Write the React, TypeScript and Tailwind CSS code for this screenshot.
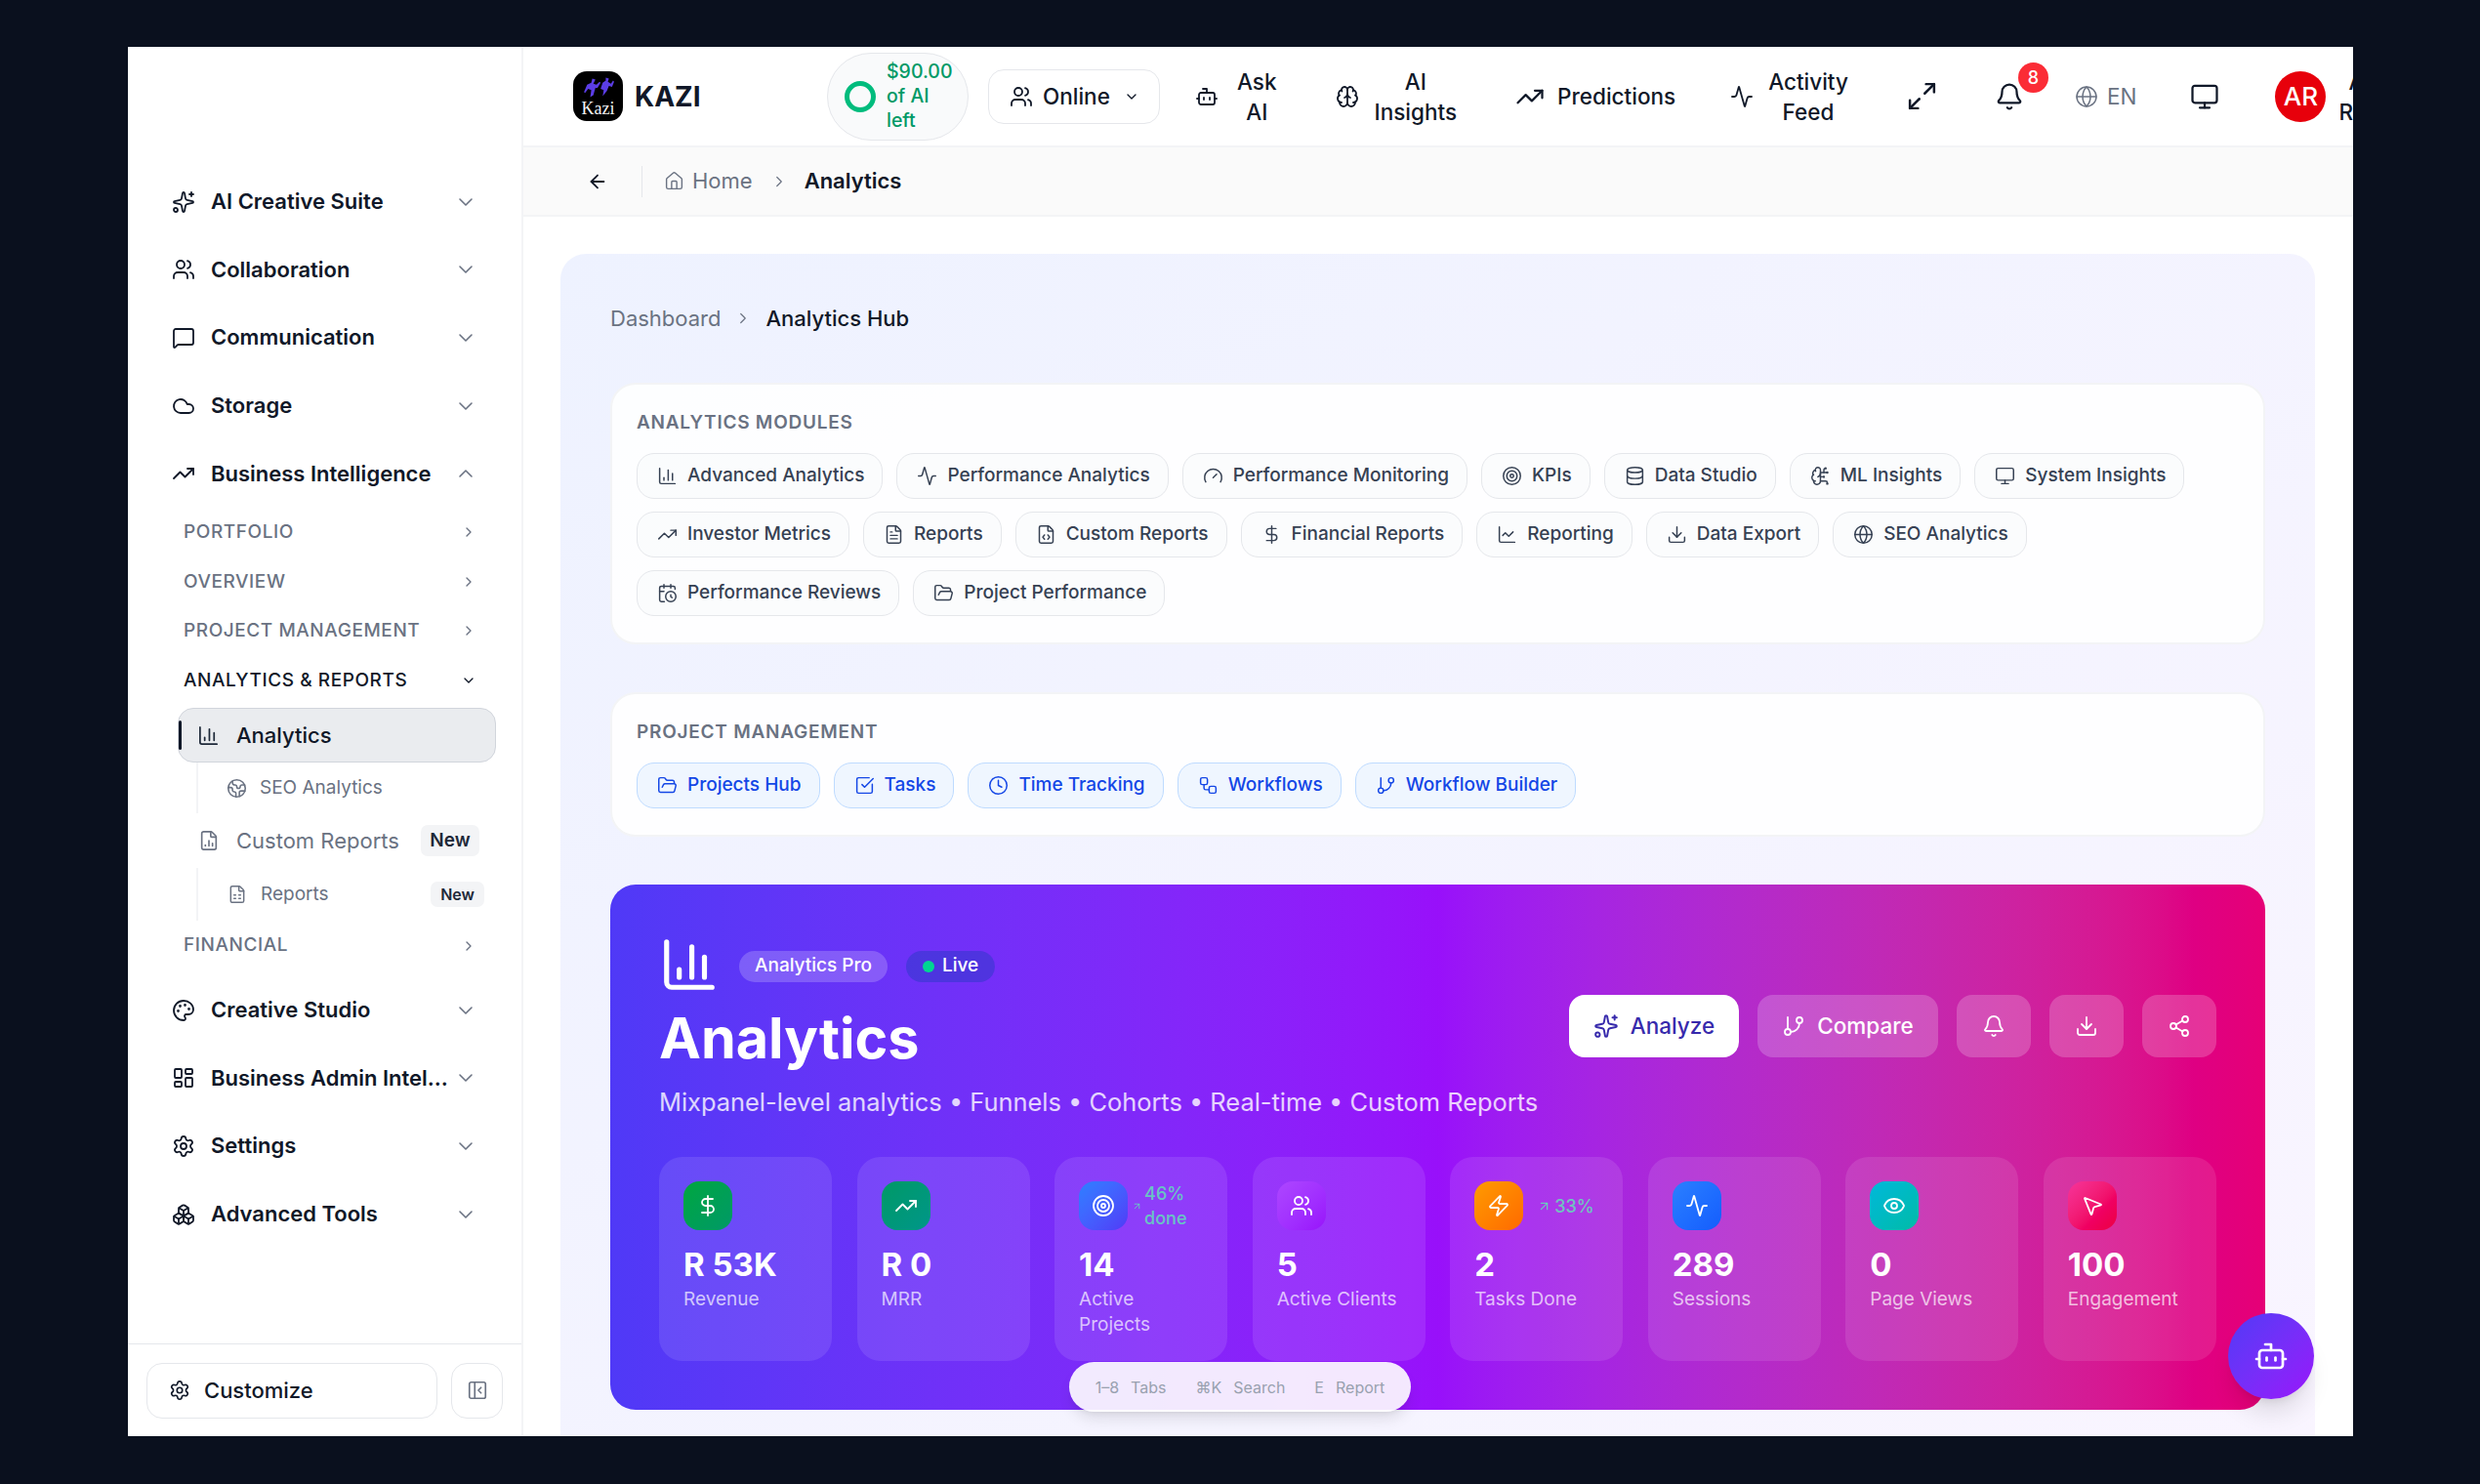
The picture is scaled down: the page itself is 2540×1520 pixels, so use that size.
import type { ComponentType } from "react";
import {
  Activity,
  ArrowLeft,
  ArrowUpRight,
  BarChart3,
  Bell,
  Bot,
  Boxes,
  Brain,
  BrainCircuit,
  CalendarClock,
  ChartLine,
  ChevronDown,
  ChevronRight,
  ChevronUp,
  Clock,
  Cloud,
  Database,
  DollarSign,
  Download,
  Earth,
  Eye,
  FileChartColumn,
  FileCode,
  FileSpreadsheet,
  FileText,
  FolderOpen,
  Gauge,
  GitBranch,
  Globe,
  Home,
  LayoutDashboard,
  Maximize2,
  MessageSquare,
  Monitor,
  MousePointer2,
  Palette,
  PanelLeftClose,
  Settings,
  Share2,
  Sparkles,
  SquareCheckBig,
  Target,
  TrendingUp,
  Users,
  Workflow,
  Zap,
} from "lucide-react";

type Icon = ComponentType<{ className?: string; strokeWidth?: number }>;

const analyticsChips: [Icon, string][] = [
  [BarChart3, "Advanced Analytics"],
  [Activity, "Performance Analytics"],
  [Gauge, "Performance Monitoring"],
  [Target, "KPIs"],
  [Database, "Data Studio"],
  [BrainCircuit, "ML Insights"],
  [Monitor, "System Insights"],
  [TrendingUp, "Investor Metrics"],
  [FileText, "Reports"],
  [FileCode, "Custom Reports"],
  [DollarSign, "Financial Reports"],
  [ChartLine, "Reporting"],
  [Download, "Data Export"],
  [Globe, "SEO Analytics"],
  [CalendarClock, "Performance Reviews"],
  [FolderOpen, "Project Performance"],
];

const projectChips: [Icon, string][] = [
  [FolderOpen, "Projects Hub"],
  [SquareCheckBig, "Tasks"],
  [Clock, "Time Tracking"],
  [Workflow, "Workflows"],
  [GitBranch, "Workflow Builder"],
];

const stats = [
  { icon: DollarSign, bg: "bg-gradient-to-br from-green-600 to-emerald-600", value: "R 53K", label: "Revenue" },
  { icon: TrendingUp, bg: "bg-gradient-to-br from-emerald-600 to-teal-600", value: "R 0", label: "MRR" },
  {
    icon: Target,
    bg: "bg-gradient-to-br from-blue-500 to-indigo-600",
    value: "14",
    label: "Active Projects",
    trend: "46% done",
    trendClass: "ml-[4px]",
    arrowClass: "w-[11px] h-[11px] mr-[2px]",
  },
  { icon: Users, bg: "bg-gradient-to-br from-purple-500 to-purple-600", value: "5", label: "Active Clients" },
  {
    icon: Zap,
    bg: "bg-gradient-to-br from-amber-500 to-orange-500",
    value: "2",
    label: "Tasks Done",
    trend: "33%",
    trendClass: "ml-[14px]",
    arrowClass: "w-[15px] h-[15px] mr-[3px]",
  },
  { icon: Activity, bg: "bg-gradient-to-br from-blue-500 to-blue-600", value: "289", label: "Sessions" },
  { icon: Eye, bg: "bg-gradient-to-br from-cyan-500 to-teal-500", value: "0", label: "Page Views" },
  { icon: MousePointer2, bg: "bg-gradient-to-br from-pink-500 to-rose-600", value: "100", label: "Engagement" },
];

function NavRow({ icon: I, label, open }: { icon: Icon; label: string; open?: boolean }) {
  const Chevron = open ? ChevronUp : ChevronDown;
  return (
    <div className="h-[69.6px] pl-[45px] pr-[45px] flex items-center">
      <I className="w-6 h-6 text-gray-900 shrink-0" strokeWidth={1.8} />
      <span className="ml-[16px] mr-[6px] flex-1 truncate text-[22px] font-semibold text-gray-900">{label}</span>
      <Chevron className="w-[24px] h-[24px] text-gray-500 shrink-0" strokeWidth={1.6} />
    </div>
  );
}

function SubHeading({ label, open }: { label: string; open?: boolean }) {
  const Chevron = open ? ChevronDown : ChevronRight;
  return (
    <div className="h-[50.6px] pl-[57px] pr-[46px] flex items-center justify-between">
      <span className={`text-[19px] font-medium tracking-[0.03em] ${open ? "text-gray-900" : "text-gray-500"}`}>{label}</span>
      <Chevron className={`w-4 h-4 ${open ? "text-gray-900" : "text-gray-500"}`} />
    </div>
  );
}

function Sidebar() {
  return (
    <aside className="w-[405px] shrink-0 h-full flex flex-col bg-white border-r-2 border-gray-100">
      <nav className="pt-[124px] flex-1">
        <NavRow icon={Sparkles} label="AI Creative Suite" />
        <NavRow icon={Users} label="Collaboration" />
        <NavRow icon={MessageSquare} label="Communication" />
        <NavRow icon={Cloud} label="Storage" />
        <NavRow icon={TrendingUp} label="Business Intelligence" open />
        <SubHeading label="PORTFOLIO" />
        <SubHeading label="OVERVIEW" />
        <SubHeading label="PROJECT MANAGEMENT" />
        <SubHeading label="ANALYTICS & REPORTS" open />

        <div className="relative mt-[3px] ml-[51px] mr-[26px] h-[56px] flex items-center rounded-[16px] bg-gray-200/80 border border-gray-300 pl-[19px]">
          <span className="absolute left-[0px] top-[12px] bottom-[12px] w-[3px] bg-gray-900 rounded" />
          <BarChart3 className="w-[23px] h-[23px] text-gray-800" strokeWidth={1.8} />
          <span className="ml-[17px] text-[22px] font-medium text-gray-900">Analytics</span>
        </div>

        <div className="ml-[70px] mr-[26px] h-[52px] border-l-2 border-gray-100 flex items-center pl-[29px]">
          <Earth className="w-[21px] h-[21px] text-gray-500" strokeWidth={1.8} />
          <span className="ml-[13px] text-[19px] text-gray-500">SEO Analytics</span>
        </div>
        <div className="h-[56px] ml-[71px] mr-[43px] flex items-center">
          <FileChartColumn className="w-[22px] h-[22px] text-gray-500 ml-[1px]" strokeWidth={1.8} />
          <span className="ml-[17px] flex-1 text-[22px] text-gray-500">Custom Reports</span>
          <span className="h-[32px] w-[60px] justify-center flex items-center rounded-[7px] bg-gray-100 text-[19px] font-semibold text-gray-800">New</span>
        </div>
        <div className="ml-[70px] mr-[38px] h-[54px] flex items-center pl-[30px] border-l-2 border-gray-100">
          <FileSpreadsheet className="w-[20px] h-[20px] text-gray-500" strokeWidth={1.8} />
          <span className="ml-[14px] flex-1 text-[19px] text-gray-500">Reports</span>
          <span className="px-[10px] h-[26px] flex items-center rounded-[7px] bg-gray-100 text-[16px] font-semibold text-gray-800">New</span>
        </div>
        <SubHeading label="FINANCIAL" />

        <div className="h-[6px]" />
        <NavRow icon={Palette} label="Creative Studio" />
        <NavRow icon={LayoutDashboard} label="Business Admin Intelligence" />
        <NavRow icon={Settings} label="Settings" />
        <NavRow icon={Boxes} label="Advanced Tools" />
      </nav>
      <div className="h-[95px] border-t border-gray-200 px-[19px] flex items-center gap-[14px]">
        <button className="w-[298px] h-[57px] flex items-center pl-[22px] rounded-[16px] bg-white border border-gray-200 text-[22px] font-medium text-gray-900">
          <Settings className="w-[22px] h-[22px]" strokeWidth={1.8} />
          <span className="ml-[14px]">Customize</span>
        </button>
        <button className="w-[53px] h-[57px] flex items-center justify-center rounded-[16px] bg-white border border-gray-200">
          <PanelLeftClose className="w-[22px] h-[22px] text-gray-500" strokeWidth={1.8} />
        </button>
      </div>
    </aside>
  );
}

function HeaderAction({ icon: I, lines, iconGap, iconSize = "w-[24px] h-[24px]" }: { icon: Icon; lines: string[]; iconGap: string; iconSize?: string }) {
  return (
    <div className="flex items-center shrink-0">
      <I className={`${iconSize} text-gray-900`} strokeWidth={1.8} />
      <span className={`${iconGap} text-center text-[22.5px] font-medium leading-[31px] text-gray-900`}>
        {lines.map((l) => (
          <span key={l} className="block">
            {l}
          </span>
        ))}
      </span>
    </div>
  );
}

function Logo() {
  return (
    <div className="w-[51px] h-[51px] shrink-0 rounded-[14px] bg-black flex flex-col items-center justify-end overflow-hidden">
      <svg viewBox="0 0 32 20" className="w-[34px] h-[22px]" fill="#5b3de6">
        <path d="M10 1l3 1-2 4 3 1 3-3 1 1-3 5-2 0-2 7-3 2 1-7-3-1-3 4-1-1 3-7 4-2z" />
        <path d="M23 0l3 1-1 3 3 2 2-3 1 1-2 5-3-1-2 5-4 5 1-6-3-1 2-6 3-2z" />
      </svg>
      <span className="font-['Liberation_Serif',serif] text-[18px] leading-[21px] text-gray-100 mb-[2px]">Kazi</span>
    </div>
  );
}

function Header() {
  return (
    <header className="h-[103px] shrink-0 flex items-center bg-white border-b-2 border-gray-100 pl-[51px] overflow-hidden">
      <Logo />
      <span className="ml-[12px] w-[197px] shrink-0 text-[28px] font-bold text-gray-900">KAZI</span>
      <div className="h-[90px] w-[145px] shrink-0 rounded-[45px] bg-gray-50 border border-gray-200 flex items-center pl-[17px]">
        <span className="w-[32px] h-[32px] rounded-full border-[5px] border-emerald-500 shrink-0" />
        <span className="ml-[11px] text-[19.5px] leading-[25px] font-medium text-emerald-600">
          $90.00
          <br />
          of AI
          <br />
          left
        </span>
      </div>
      <button className="ml-[20px] w-[176px] h-[56px] shrink-0 rounded-[16px] bg-white border border-gray-200 flex items-center pl-[21px] text-[22.5px] font-medium text-gray-900">
        <Users className="w-[24px] h-[24px]" strokeWidth={1.8} />
        <span className="ml-[10px]">Online</span>
        <ChevronDown className="w-[16px] h-[16px] ml-[14px]" strokeWidth={2} />
      </button>
      <div className="ml-[36px]">
        <HeaderAction icon={Bot} lines={["Ask", "AI"]} iconGap="ml-[19px]" />
      </div>
      <div className="ml-[60px]">
        <HeaderAction icon={Brain} lines={["AI", "Insights"]} iconGap="ml-[16px]" />
      </div>
      <div className="ml-[60px]">
        <HeaderAction icon={TrendingUp} iconSize="w-[30px] h-[30px]" lines={["Predictions"]} iconGap="ml-[13px]" />
      </div>
      <div className="ml-[56px]">
        <HeaderAction icon={Activity} lines={["Activity", "Feed"]} iconGap="ml-[15px]" />
      </div>
      <Maximize2 className="ml-[59px] w-[33px] h-[33px] shrink-0 text-gray-900" strokeWidth={1.8} />
      <div className="relative ml-[58px] shrink-0">
        <Bell className="w-[30px] h-[30px] text-gray-900" strokeWidth={1.8} />
        <span className="absolute -top-[20px] left-[24px] w-[31px] h-[31px] rounded-full bg-red-500 flex items-center justify-center text-[18px] font-medium text-white">8</span>
      </div>
      <Globe className="ml-[52px] w-[24px] h-[24px] shrink-0 text-gray-500" strokeWidth={1.5} />
      <span className="ml-[9px] shrink-0 text-[22.5px] text-gray-500">EN</span>
      <Monitor className="ml-[55px] w-[30px] h-[30px] shrink-0 text-gray-900" strokeWidth={1.8} />
      <div className="ml-[57px] w-[52px] h-[52px] shrink-0 rounded-full bg-red-600 flex items-center justify-center text-[26px] font-medium text-white">AR</div>
      <span className="ml-[13px] shrink-0 text-center text-[22.5px] font-medium leading-[31px] text-gray-900">
        Alex
        <br />
        Rivera
      </span>
    </header>
  );
}

function Breadcrumbs() {
  return (
    <div className="h-[71px] shrink-0 flex items-center pl-[65px] bg-neutral-50 border-b-2 border-gray-100">
      <ArrowLeft className="w-[22px] h-[22px] text-gray-900" strokeWidth={2} />
      <span className="ml-[34px] w-px h-[32px] bg-gray-200" />
      <Home className="ml-[22px] w-[21px] h-[21px] text-gray-500" strokeWidth={1.6} />
      <span className="ml-[8px] text-[22px] text-gray-500">Home</span>
      <ChevronRight className="ml-[18px] w-[18px] h-[18px] text-gray-500" strokeWidth={1.6} />
      <span className="ml-[17px] text-[22px] font-semibold text-gray-900">Analytics</span>
    </div>
  );
}

function Chip({ icon: I, label, blue }: { icon: Icon; label: string; blue?: boolean }) {
  return (
    <span
      className={`h-[47px] flex items-center gap-[10px] pl-[20px] pr-[18px] rounded-[18px] border text-[19px] font-medium ${
        blue ? "bg-blue-50 border-blue-200 text-blue-700" : "bg-gray-50/60 border-gray-200 text-gray-700"
      }`}
    >
      <I className="w-[21px] h-[21px]" strokeWidth={1.7} />
      {label}
    </span>
  );
}

function ChipCard({ title, chips, blue }: { title: string; chips: [Icon, string][]; blue?: boolean }) {
  return (
    <section className="rounded-[26px] bg-white/90 border-2 border-gray-100 px-[25px] pt-[27px] pb-[27px]">
      <h3 className="h-[24px] flex items-center text-[19px] font-semibold tracking-[0.04em] text-gray-500">{title}</h3>
      <div className="mt-[19px] flex flex-wrap gap-x-[14px] gap-y-[13px]">
        {chips.map(([icon, label]) => (
          <Chip key={label} icon={icon} label={label} blue={blue} />
        ))}
      </div>
    </section>
  );
}

function StatCard({ s }: { s: (typeof stats)[number] }) {
  const I = s.icon;
  return (
    <div className="h-[209px] rounded-[24px] bg-white/10 px-[25px] pt-[25px]">
      <div className="h-[50px] flex items-center">
        <span className={`w-[50px] h-[50px] shrink-0 rounded-[16px] flex items-center justify-center ${s.bg}`}>
          <I className="w-[24px] h-[24px] text-white" strokeWidth={1.8} />
        </span>
        {s.trend && (
          <span className={`${s.trendClass} flex items-center text-[18px] leading-[25px] font-medium text-emerald-300/80`}>
            <ArrowUpRight className={`${s.arrowClass} shrink-0`} />
            <span className="w-[50px] shrink-0">{s.trend}</span>
          </span>
        )}
      </div>
      <div className="mt-[15px] text-[33px] leading-[40px] font-bold text-white">{s.value}</div>
      <div className="mt-[3px] text-[19px] leading-[26px] text-white/70">{s.label}</div>
    </div>
  );
}

function Hero() {
  return (
    <section className="mt-[49px] h-[538px] rounded-[26px] bg-gradient-to-r from-indigo-600 via-purple-600 to-pink-600 px-[50px] pt-[54px]">
      <div className="flex items-center justify-between">
        <div>
          <div className="flex items-center">
            <BarChart3 className="w-[62px] h-[62px] text-white -mt-[3px]" strokeWidth={2} />
            <span className="ml-[20px] h-[32px] px-[16px] flex items-center rounded-full bg-white/20 text-[19px] font-medium text-white">Analytics Pro</span>
            <span className="ml-[19px] h-[32px] px-[17px] flex items-center gap-[8px] rounded-full bg-blue-800/40 text-[19px] font-medium text-white">
              <span className="w-[12px] h-[12px] rounded-full bg-emerald-400" />
              Live
            </span>
          </div>
          <h1 className="mt-[5px] text-[57.5px] leading-[78px] font-bold text-white">Analytics</h1>
          <p className="mt-[8px] text-[25.4px] leading-[38px] text-white/80">
            Mixpanel-level analytics • Funnels • Cohorts • Real-time • Custom Reports
          </p>
        </div>
        <div className="flex items-center gap-[19px] -mt-[6px]">
          <button className="h-[64px] w-[174px] rounded-[16px] bg-white flex items-center justify-center gap-[12px] text-[22.5px] font-medium text-indigo-800">
            <Sparkles className="w-[26px] h-[26px]" strokeWidth={1.8} />
            Analyze
          </button>
          <button className="h-[64px] w-[185px] rounded-[16px] bg-white/20 flex items-center justify-center gap-[12px] text-[22.5px] font-medium text-white">
            <GitBranch className="w-[24px] h-[24px]" strokeWidth={1.8} />
            Compare
          </button>
          {[Bell, Download, Share2].map((I, i) => (
            <button key={i} className="h-[64px] w-[76px] rounded-[16px] bg-white/20 flex items-center justify-center">
              <I className="w-[24px] h-[24px] text-white" strokeWidth={1.8} />
            </button>
          ))}
        </div>
      </div>
      <div className="mt-[37px] grid grid-cols-8 gap-[25.4px]">
        {stats.map((s) => (
          <StatCard key={s.label} s={s} />
        ))}
      </div>
    </section>
  );
}

function ShortcutHint() {
  const hints = [
    ["1–8", "Tabs"],
    ["⌘K", "Search"],
    ["E", "Report"],
  ];
  return (
    <div className="absolute left-[964px] top-[1347px] w-[350px] h-[51px] rounded-full bg-white/90 shadow-lg flex items-center justify-center gap-[30px] text-[16px] text-gray-400">
      {hints.map(([k, l]) => (
        <span key={k} className="flex items-center gap-[12px]">
          <span>{k}</span>
          <span>{l}</span>
        </span>
      ))}
    </div>
  );
}

export default function App() {
  return (
    <div className="w-[2540px] h-[1520px] overflow-hidden bg-[#0a101e] pl-[131px] pt-[48px] font-['Inter',sans-serif]">
      <div className="relative w-[2279px] h-[1423px] bg-white flex overflow-hidden">
        <Sidebar />
        <div className="flex-1 min-w-0 flex flex-col">
          <Header />
          <Breadcrumbs />
          <main className="flex-1 min-h-0 bg-white pl-[38px] pr-[39px] pt-[38px] overflow-hidden">
            <div className="h-[1400px] rounded-t-[26px] bg-gradient-to-br from-indigo-50 to-purple-50 px-[51px] pt-[49px]">
              <div className="h-[34px] flex items-center text-[22px]">
                <span className="text-gray-500">Dashboard</span>
                <ChevronRight className="mx-[14px] w-[18px] h-[18px] text-gray-500" strokeWidth={1.6} />
                <span className="font-medium text-gray-900">Analytics Hub</span>
              </div>
              <div className="mt-[49px]">
                <ChipCard title="ANALYTICS MODULES" chips={analyticsChips} />
              </div>
              <div className="mt-[49px]">
                <ChipCard title="PROJECT MANAGEMENT" chips={projectChips} blue />
              </div>
              <Hero />
            </div>
          </main>
        </div>
        <ShortcutHint />
        <button className="absolute left-[2151px] top-[1297px] w-[88px] h-[88px] rounded-full bg-gradient-to-br from-indigo-600 to-purple-600 shadow-xl flex items-center justify-center">
          <Bot className="w-[36px] h-[36px] text-white" strokeWidth={1.8} />
        </button>
      </div>
    </div>
  );
}
